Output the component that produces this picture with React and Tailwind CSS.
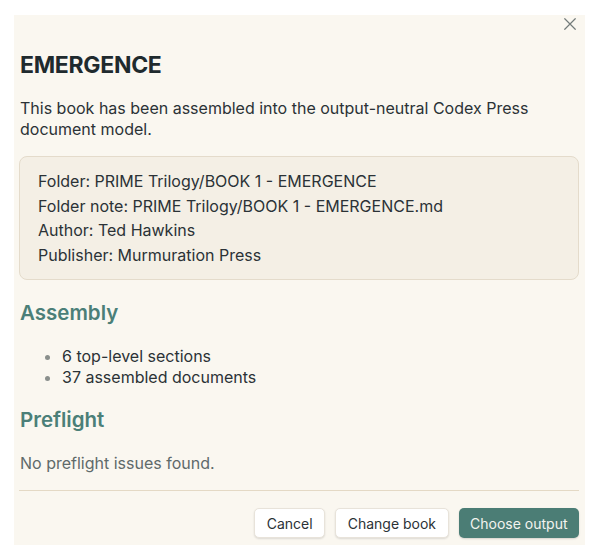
import React from "react";

function XIcon() {
  return (
    <svg width="18" height="18" viewBox="0 0 24 24" fill="none" stroke="currentColor" strokeWidth="1.6" strokeLinecap="round">
      <path d="M5 5L19 19M19 5L5 19" />
    </svg>
  );
}

export default function App() {
  return (
    <div className="w-[600px] h-[559px] bg-white pt-[15px] pl-[14px]" style={{ fontFamily: "Inter, 'Noto Sans', sans-serif" }}>
      <div className="relative w-[571px] h-[530px] bg-[#faf7f0] pl-[5px] pr-[6px] pt-[34px]">
        <button className="absolute top-[0px] right-[6px] text-[#737b7a]">
          <XIcon />
        </button>
        <h1 className="pl-px text-[23px] leading-[32px] font-bold text-[#1f2a2e] tracking-[-0.3px]">EMERGENCE</h1>
        <p className="mt-[16.5px] pl-px text-[16px] leading-[21px] text-[#2b3236]">
          This book has been assembled into the output-neutral Codex Press document model.
        </p>
        <div className="mt-[16.5px] rounded-[8px] border border-[#e4dbcb] bg-[#f4efe5] pl-[18px] py-[12px] text-[16px] leading-[24.5px] text-[#2b3236]">
          <div>Folder: PRIME Trilogy/BOOK 1 - EMERGENCE</div>
          <div>Folder note: PRIME Trilogy/BOOK 1 - EMERGENCE.md</div>
          <div>Author: Ted Hawkins</div>
          <div>Publisher: Murmuration Press</div>
        </div>
        <h2 className="mt-[19px] pl-px text-[20.5px] leading-[28px] font-semibold text-[#4b7f78]">Assembly</h2>
        <ul className="mt-[18.5px] pl-[43px] list-disc marker:text-[#8a8f8c] text-[16px] leading-[21px] text-[#2b3236]">
          <li>6 top-level sections</li>
          <li>37 assembled documents</li>
        </ul>
        <h2 className="mt-[18.5px] pl-px text-[20.5px] leading-[28px] font-semibold text-[#4b7f78]">Preflight</h2>
        <p className="mt-[18.5px] pl-px text-[16px] leading-[21px] text-[#5f6a6a]">No preflight issues found.</p>
        <div className="mt-[16.5px] h-px bg-[#e4d9c5]" />
        <div className="mt-[17px] flex justify-end gap-[10px]">
          <button className="h-[30px] px-[11.5px] rounded-[5px] bg-white border border-[#e8e3da] shadow-[0_1px_2px_rgba(0,0,0,0.12)] text-[14px] text-[#2b3236]">Cancel</button>
          <button className="h-[30px] px-[11.5px] rounded-[5px] bg-white border border-[#e8e3da] shadow-[0_1px_2px_rgba(0,0,0,0.12)] text-[14px] text-[#2b3236]">Change book</button>
          <button className="h-[30px] px-[11.5px] rounded-[5px] bg-[#4b7d75] shadow-[0_1px_2px_rgba(0,0,0,0.15)] text-[14px] text-[#f3f4ef]">Choose output</button>
        </div>
      </div>
    </div>
  );
}
